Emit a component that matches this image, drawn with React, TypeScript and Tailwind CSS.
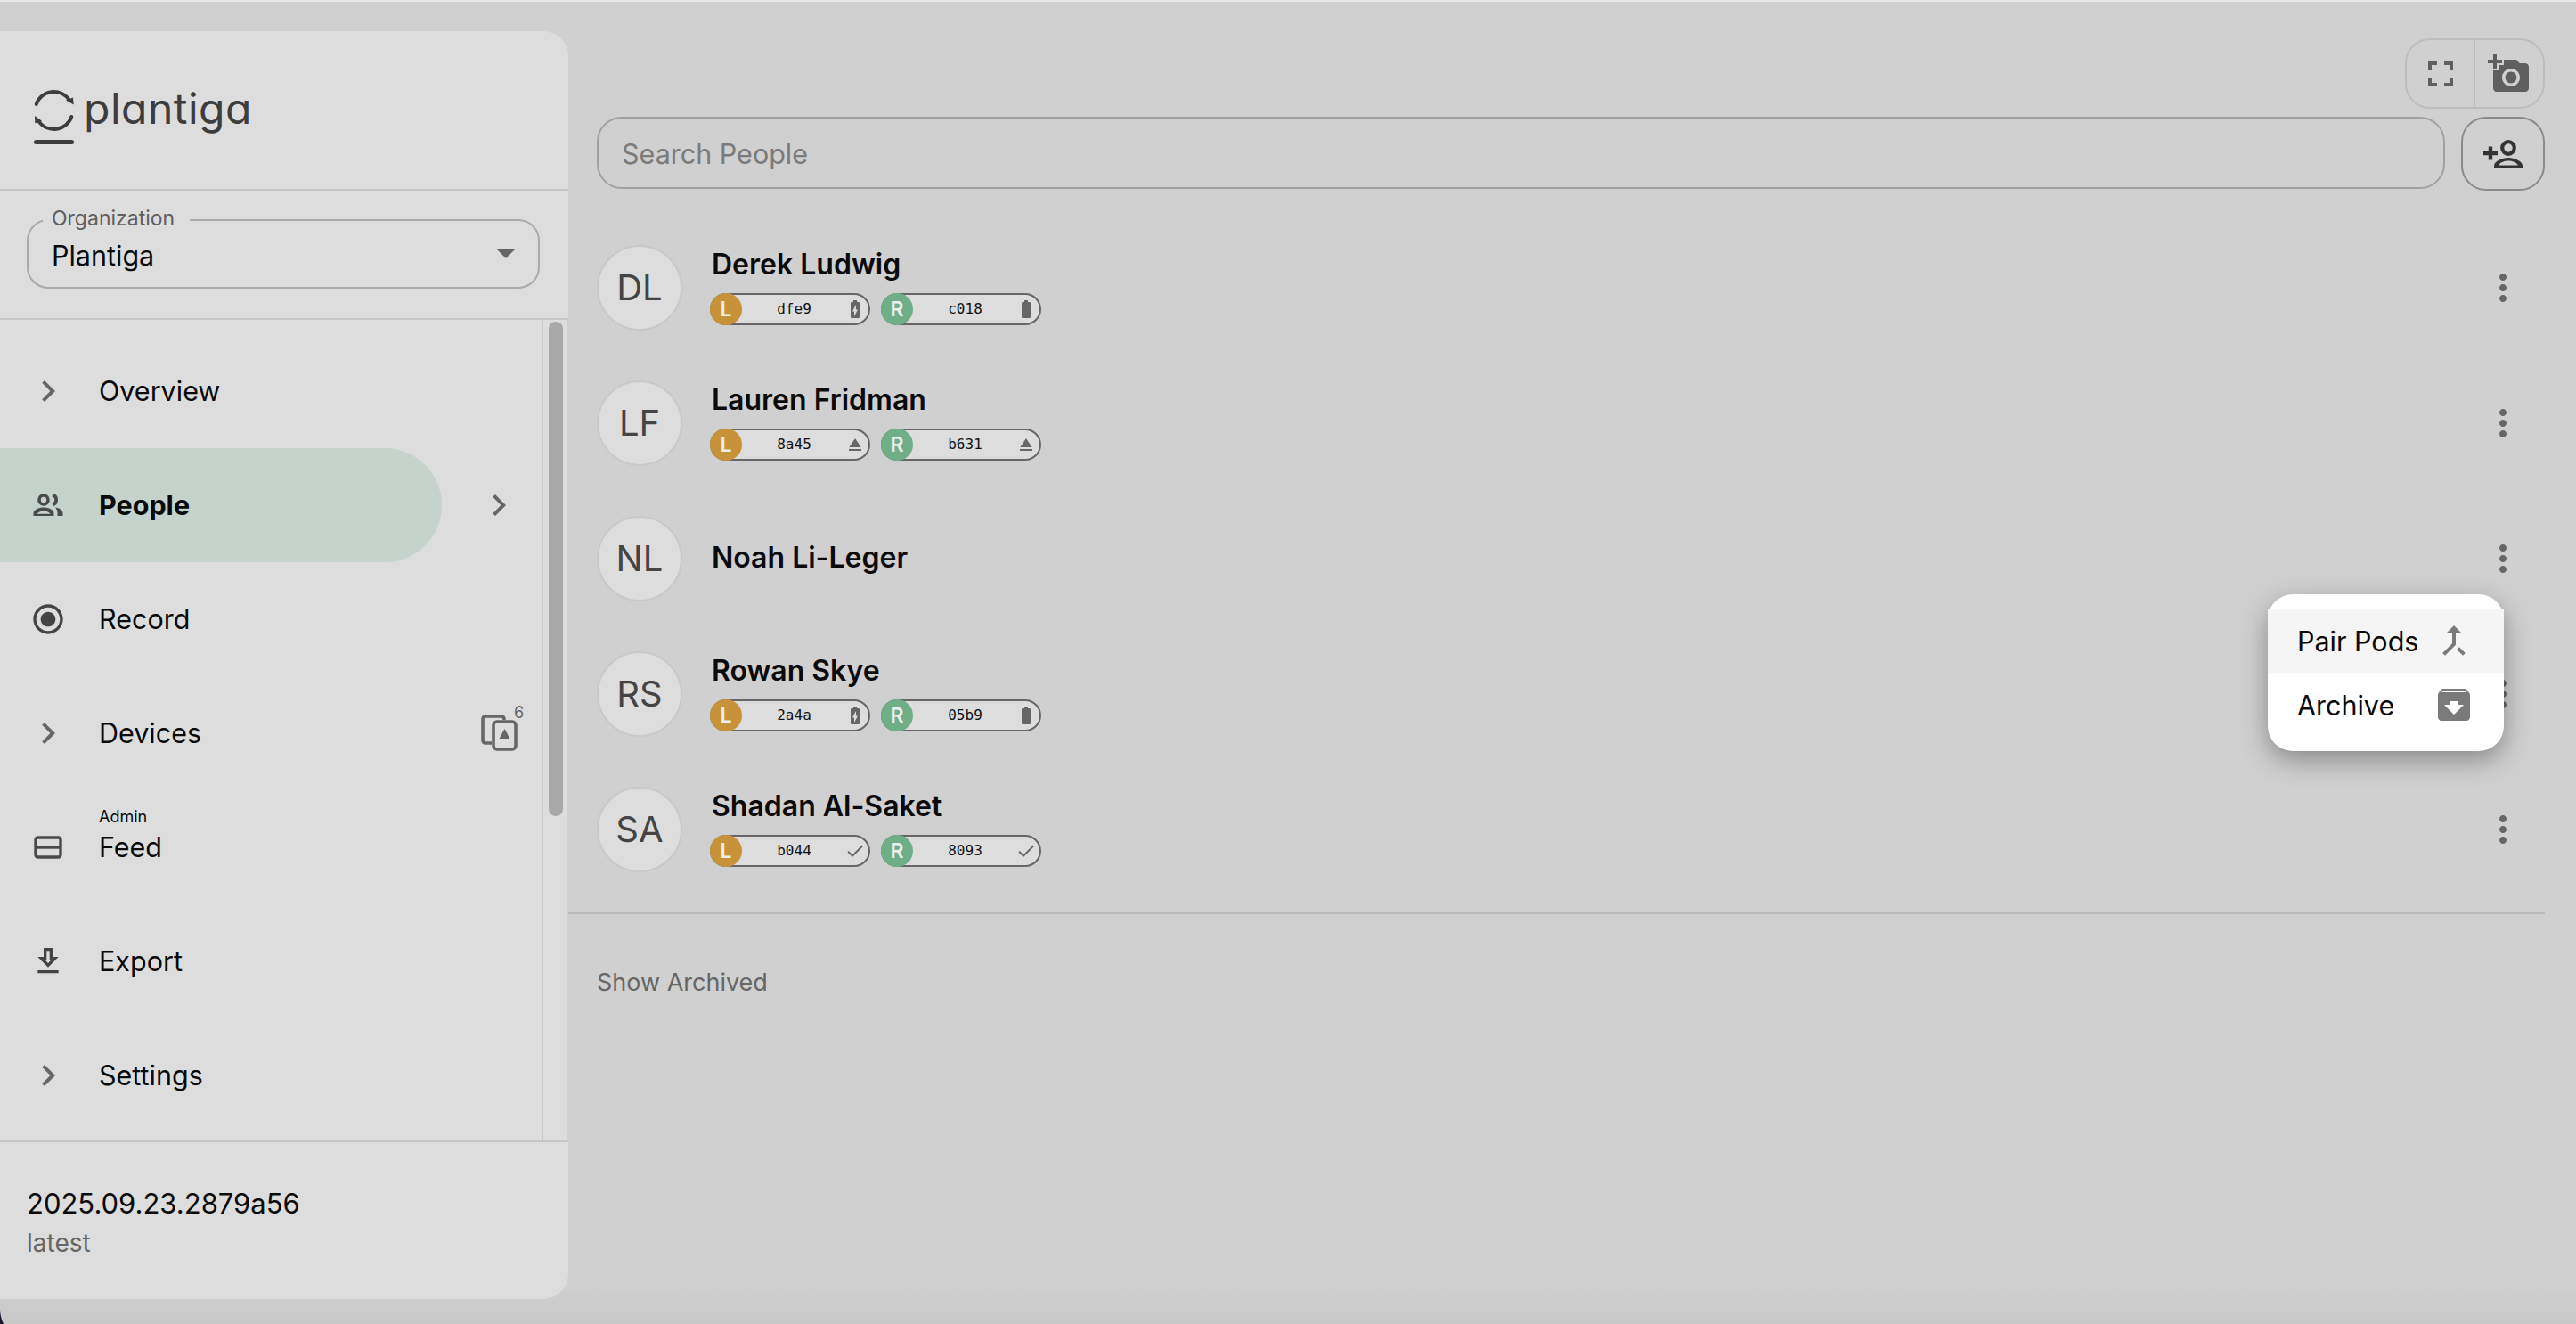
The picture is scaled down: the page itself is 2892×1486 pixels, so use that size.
import React from "react";

const sans = "font-['Inter','Liberation_Sans',sans-serif]";

function Mui({ d, size = 40, className = "" }: { d: string; size?: number; className?: string }) {
  return (
    <svg width={size} height={size} viewBox="0 0 24 24" fill="currentColor" className={className}>
      <path d={d} />
    </svg>
  );
}

const icons = {
  chevron: "M10 6 8.59 7.41 13.17 12l-4.58 4.59L10 18l6-6z",
  record:
    "M12 7c-2.76 0-5 2.24-5 5s2.24 5 5 5 5-2.24 5-5-2.24-5-5-5zm0-5C6.48 2 2 6.48 2 12s4.48 10 10 10 10-4.48 10-10S17.52 2 12 2zm0 18c-4.42 0-8-3.58-8-8s3.58-8 8-8 8 3.58 8 8-3.58 8-8 8z",
  download: "M19 9h-4V3H9v6H5l7 7 7-7zM11 5h2v6h1.17L12 13.17 9.83 11H11V5zm-6 13h14v2H5z",
  fullscreen: "M7 14H5v5h5v-2H7v-3zm-2-4h2V7h3V5H5v5zm12 7h-3v2h5v-5h-2v3zM14 5v2h3v3h2V5h-5z",
  camera:
    "M3 4V1h2v3h3v2H5v3H3V6H0V4h3zm3 6V7h3V4h7l1.83 2H21c1.1 0 2 .9 2 2v12c0 1.1-.9 2-2 2H5c-1.1 0-2-.9-2-2V10h3zm7 9c2.76 0 5-2.24 5-5s-2.24-5-5-5-5 2.24-5 5 2.24 5 5 5zm-3.2-5c0 1.77 1.43 3.2 3.2 3.2s3.2-1.43 3.2-3.2-1.43-3.2-3.2-3.2-3.2 1.43-3.2 3.2z",
  merge: "M17 20.41 18.41 19 15 15.59 13.59 17 17 20.41zM7.5 8H11v5.59L5.59 19 7 20.41l6-6V8h3.5L12 3.5 7.5 8z",
  archive:
    "M20.54 5.23l-1.39-1.68C18.88 3.21 18.47 3 18 3H6c-.47 0-.88.21-1.16.55L3.46 5.23C3.17 5.57 3 6.02 3 6.5V19c0 1.1.9 2 2 2h14c1.1 0 2-.9 2-2V6.5c0-.48-.17-.93-.46-1.27zM12 17.5 6.5 12H10v-2h4v2h3.5L12 17.5zM5.12 5l.81-1h12l.94 1H5.12z",
  charging:
    "M15.67 4H14V2h-4v2H8.33C7.6 4 7 4.6 7 5.33v15.33C7 21.4 7.6 22 8.33 22h7.33c.74 0 1.34-.6 1.34-1.33V5.33C17 4.6 16.4 4 15.67 4zM11 20v-5.5H9L13 7v5.5h2L11 20z",
  battery:
    "M15.67 4H14V2h-4v2H8.33C7.6 4 7 4.6 7 5.33v15.33C7 21.4 7.6 22 8.33 22h7.33c.74 0 1.34-.6 1.34-1.33V5.33C17 4.6 16.4 4 15.67 4z",
  eject: "M5 17h14v2H5zm7-12L5.33 15h13.34z",
  check: "M9 16.17 4.83 12l-1.42 1.41L9 19 21 7l-1.41-1.41z",
  kebab:
    "M12 8c1.1 0 2-.9 2-2s-.9-2-2-2-2 .9-2 2 .9 2 2 2zm0 2c-1.1 0-2 .9-2 2s.9 2 2 2 2-.9 2-2-.9-2-2-2zm0 6c-1.1 0-2 .9-2 2s.9 2 2 2 2-.9 2-2-.9-2-2-2z",
};

function PeopleIcon() {
  return (
    <svg width="34" height="26" viewBox="0 0 34 26" fill="none" className="text-[#4a4a4a]">
      <circle cx="12" cy="7" r="5" stroke="currentColor" strokeWidth="3.6" />
      <path d="M22 1.6a5.6 5.6 0 0 1 0 10.8" stroke="currentColor" strokeWidth="3.8" />
      <path d="M0.5 25v-3c0-4 6-6.5 11.500-6.5s11.500 2.500 11.500 6.500v3z" fill="currentColor" />
      <path d="M4.500 22.800c1-2 4.300-3.300 7.500-3.300s6.500 1.300 7.500 3.300z" fill="#c5d3cc" />
      <path d="M25 15.500c4.500 .6 8.500 2.600 8.500 6.500v3h-6v-3.500c0-2.500-1-4.500-2.500-6z" fill="currentColor" />
    </svg>
  );
}

function AgendaIcon() {
  return (
    <svg width="32" height="26" viewBox="0 0 32 26" fill="none" className="text-[#4a4a4a]">
      <rect x="2" y="2" width="28" height="22" rx="2.500" stroke="currentColor" strokeWidth="3.400" />
      <path d="M2 13h28" stroke="currentColor" strokeWidth="3.400" />
    </svg>
  );
}

function DevicesIcon() {
  return (
    <svg width="42" height="42" viewBox="0 0 42 42" fill="none" className="text-[#666666]">
      <path d="M27 6V5a3 3 0 0 0-3-3H6a3 3 0 0 0-3 3v24a3 3 0 0 0 3 3h7" stroke="currentColor" strokeWidth="3.600" />
      <rect x="15" y="8" width="25" height="31" rx="4" stroke="currentColor" strokeWidth="3.600" />
      <path d="M27.500 16l6 11h-12z" fill="currentColor" />
    </svg>
  );
}

function PersonAddIcon() {
  return (
    <svg width="44" height="32" viewBox="0 0 44 32" fill="none" className="text-[#333333]">
      <path d="M0 15h16M8 7.500v15" stroke="currentColor" strokeWidth="4.400" />
      <circle cx="28" cy="9" r="6.800" stroke="currentColor" strokeWidth="4.200" />
      <path d="M12 32v-3c0-5 9-9 16-9s16 4 16 9v3z" fill="currentColor" />
      <path d="M17 28.400c1.500-2.800 6.500-4.900 11-4.900s9.500 2.100 11 4.900z" fill="#d0d0d0" />
    </svg>
  );
}

function LogoMark() {
  return (
    <svg width="48" height="66" viewBox="0 0 48 66" fill="none" className="shrink-0 text-[#3d3d3d]">
      <path d="M3.700 19A21 21 0 0 1 41 14.500" stroke="currentColor" strokeWidth="4" strokeLinecap="round" />
      <path d="M43.300 33A21 21 0 0 1 6 37.500" stroke="currentColor" strokeWidth="4" strokeLinecap="round" />
      <path d="M45.700 19.500 37 14.500l8-3zM2 32l8 5.700-7.700 2.600z" fill="currentColor" />
      <rect x="1" y="59" width="45" height="5" rx="2.500" fill="currentColor" />
    </svg>
  );
}

type Nav = { label: string; icon: React.ReactNode; active?: boolean; over?: string; trailing?: React.ReactNode };

const chevron = <Mui d={icons.chevron} size={48} className="text-[#666666]" />;

const nav: Nav[] = [
  { label: "Overview", icon: chevron },
  { label: "People", icon: <PeopleIcon />, active: true, trailing: chevron },
  { label: "Record", icon: <Mui d={icons.record} className="text-[#444444]" /> },
  {
    label: "Devices",
    icon: chevron,
    trailing: (
      <span className="relative flex">
        <DevicesIcon />
        <span className="absolute left-[38px] top-[-14px] text-[18px] leading-[24px] text-[#666666]">6</span>
      </span>
    ),
  },
  { label: "Feed", icon: <AgendaIcon />, over: "Admin" },
  { label: "Export", icon: <Mui d={icons.download} className="text-[#444444]" /> },
  { label: "Settings", icon: chevron },
];

type Pod = { id: string; status: "charging" | "battery" | "eject" | "check" };
type Person = { initials: string; name: string; left?: Pod; right?: Pod };

const people: Person[] = [
  { initials: "DL", name: "Derek Ludwig", left: { id: "dfe9", status: "charging" }, right: { id: "c018", status: "battery" } },
  { initials: "LF", name: "Lauren Fridman", left: { id: "8a45", status: "eject" }, right: { id: "b631", status: "eject" } },
  { initials: "NL", name: "Noah Li-Leger" },
  { initials: "RS", name: "Rowan Skye", left: { id: "2a4a", status: "charging" }, right: { id: "05b9", status: "battery" } },
  { initials: "SA", name: "Shadan Al-Saket", left: { id: "b044", status: "check" }, right: { id: "8093", status: "check" } },
];

function PodChip({ side, pod }: { side: "L" | "R"; pod: Pod }) {
  return (
    <div className="flex h-[36px] w-[180px] items-center rounded-full border-2 border-[#666666] bg-[#dddddd]">
      <span
        className={`-ml-[2px] flex h-[36px] w-[36px] shrink-0 items-center justify-center rounded-full text-[23px] font-semibold text-[#eeeeee] ${
          side === "L" ? "bg-[#c8923a]" : "bg-[#6fae87]"
        }`}
      >
        {side}
      </span>
      <span className="flex-1 pl-[2px] text-center font-['DejaVu_Sans_Mono',monospace] text-[16px] leading-none text-[#111111]">
        {pod.id}
      </span>
      <Mui d={icons[pod.status]} size={24} className="mr-[3px] shrink-0 text-[#666666]" />
    </div>
  );
}

function PersonRow({ person }: { person: Person }) {
  const hasPods = person.left && person.right;
  return (
    <div className="flex h-[152px] items-center pl-[32px] pr-[23px]">
      <div className="flex h-[96px] w-[96px] shrink-0 items-center justify-center rounded-full border-2 border-[#c8c8c8] bg-[#dddddd] text-[40px] text-[#444444]">
        {person.initials}
      </div>
      <div className={`ml-[31px] flex flex-1 flex-col ${hasPods ? "-mt-[4px]" : "-mt-[3px]"}`}>
        <div className="pl-[2px] text-[32px] font-semibold leading-[40px] text-[#0a0a0a]">{person.name}</div>
        {person.left && person.right && (
          <div className="mt-[12px] flex gap-[12px]">
            <PodChip side="L" pod={person.left} />
            <PodChip side="R" pod={person.right} />
          </div>
        )}
      </div>
      <Mui d={icons.kebab} size={48} className="text-[#666666]" />
    </div>
  );
}

export default function App() {
  return (
    <div
      className={`${sans} relative flex h-[1486px] w-full flex-col overflow-hidden bg-[linear-gradient(180deg,#d0d0d0_97%,#c8c8c8_100%)]`}
    >
      <div className="h-[2px] bg-[#e8e8e8]" />
      <div className="flex min-h-0 flex-1">
        <aside className="mt-[33px] flex h-[1423px] w-[638px] shrink-0 flex-col rounded-r-[28px] bg-[#dddddd]">
          <div className="flex h-[177px] shrink-0 items-start pl-[37px] pt-[63px]">
            <LogoMark />
            <span className="ml-[9px] mt-[-12px] text-[48px] font-normal leading-[72px] tracking-[0.5px] text-[#3d3d3d] [font-feature-settings:'cv11']">
              plantiga
            </span>
          </div>
          <div className="h-[147px] shrink-0 border-y-2 border-[#c6c6c6] px-[30px] pt-[32px]">
            <div className="relative flex h-[78px] w-[576px] items-center justify-between rounded-[24px] border-2 border-[#aaaaaa] pl-[26px] pr-[26px]">
              <span className="absolute left-[16px] top-[-18px] bg-[#dddddd] pl-[10px] pr-[17px] text-[23px] leading-[30px] text-[#5f5f5f]">
                Organization
              </span>
              <span className="pt-[3px] text-[30.500px] leading-[40px] text-[#0a0a0a]">Plantiga</span>
              <span className="h-0 w-0 border-x-[10px] border-t-[10px] border-x-transparent border-t-[#666666]" />
            </div>
          </div>
          <div className="flex min-h-0 flex-1">
            <div className="flex w-[608px] shrink-0 flex-col pt-[16px]">
              {nav.map((item) => (
                <div key={item.label} className="flex h-[128px] shrink-0 items-center">
                  <div
                    className={`flex h-full w-[496px] items-center rounded-r-full ${item.active ? "bg-[#c5d3cc]" : ""}`}
                  >
                    <span className="flex w-[111px] shrink-0 justify-center pr-[4px]">{item.icon}</span>
                    <span className={`relative text-[30.500px] leading-[40px] text-[#0a0a0a] ${item.active ? "font-bold" : ""}`}>
                      {item.over && (
                        <span className="absolute left-0 top-[-25px] text-[18px] leading-[22px]">{item.over}</span>
                      )}
                      {item.label}
                    </span>
                  </div>
                  <span className="flex flex-1 justify-center pl-[16px]">{item.trailing}</span>
                </div>
              ))}
            </div>
            <div className="w-[28px] shrink-0 border-l-2 border-[#c8c8c8] pl-[6px] pr-[4px] pt-[2px]">
              <div className="h-[555px] w-[16px] rounded-full bg-[#a8a8a8]" />
            </div>
            <div className="w-[2px] bg-[#d0d0d0]" />
          </div>
          <div className="flex h-[178px] shrink-0 flex-col border-t-2 border-[#c6c6c6] pl-[30px] pt-[49px]">
            <span className="text-[31px] leading-[40px] text-[#0a0a0a]">2025.09.23.2879a56</span>
            <span className="mt-[4px] text-[28px] leading-[40px] text-[#666666]">latest</span>
          </div>
        </aside>

        <main className="flex min-w-0 flex-1 flex-col">
          <div className="mr-[35px] mt-[41px] flex justify-end">
            <div className="flex h-[79px] w-[157px] rounded-[28px] border-2 border-[#bdbdbd]">
              <span className="flex w-[77px] items-center justify-center border-r-2 border-[#bdbdbd]">
                <Mui d={icons.fullscreen} size={48} className="text-[#5f5f5f]" />
              </span>
              <span className="flex flex-1 items-center justify-center">
                <Mui d={icons.camera} size={48} className="text-[#5f5f5f]" />
              </span>
            </div>
          </div>
          <div className="mt-[9px] flex items-start gap-[18px] pl-[32px] pr-[35px]">
            <div className="flex h-[81px] flex-1 items-center rounded-[28px] border-2 border-[#a0a0a0] pl-[26px] pt-[3px] text-[30.500px] text-[#7b7b7b]">
              Search People
            </div>
            <button className="flex h-[83px] w-[94px] items-center justify-center rounded-[28px] border-2 border-[#8a8a8a]">
              <PersonAddIcon />
            </button>
          </div>
          <div className="mt-[33px] mr-[35px] border-b-2 border-[#bbbbbb] pb-[17px]">
            {people.map((person) => (
              <PersonRow key={person.initials} person={person} />
            ))}
          </div>
          <div className="mt-[60px] pl-[32px] text-[27px] leading-[34px] text-[#666666]">Show Archived</div>
        </main>
      </div>

      <div className="absolute left-[2546px] top-[667px] flex h-[176px] w-[265px] flex-col rounded-[28px] bg-white py-[16px] shadow-[0_10px_30px_rgba(0,0,0,0.35)]">
        <div className="flex h-[72px] items-center justify-between bg-[#f5f5f5] pl-[33px] pr-[32px] text-[30.500px] text-[#0a0a0a]">
          <span className="pt-[1px]">Pair Pods</span>
          <Mui d={icons.merge} size={48} className="text-[#7a7a7a]" />
        </div>
        <div className="flex h-[72px] items-center justify-between pl-[33px] pr-[32px] text-[30.500px] text-[#0a0a0a]">
          <span className="pt-[1px]">Archive</span>
          <Mui d={icons.archive} size={48} className="text-[#7a7a7a]" />
        </div>
      </div>

      <svg width="4" height="16" viewBox="0 0 4 16" className="absolute bottom-0 left-0 text-[#1c1428]">
        <path d="M0 0c.3 6 1.500 11 4 16H0z" fill="currentColor" />
      </svg>
    </div>
  );
}
